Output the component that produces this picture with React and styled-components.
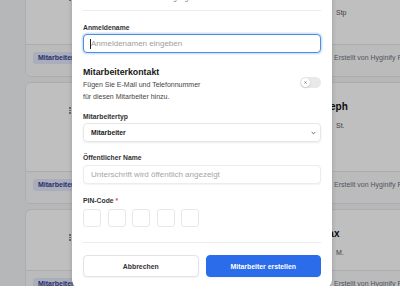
import React from "react";
import styled, { createGlobalStyle } from "styled-components";

const GlobalStyle = createGlobalStyle`
  html, body { margin: 0; padding: 0; width: 400px; height: 286px; overflow: hidden; background: #f3f4f6; }
  body { font-family: "Liberation Sans", Arial, Helvetica, sans-serif; }
  * { box-sizing: border-box; }
  #root { width: 400px; height: 286px; }
`;

const Page = styled.div`
  position: relative;
  width: 400px;
  height: 286px;
  overflow: hidden;
  background: #f3f4f6;
`;

const CardList = styled.div`
  display: flex;
  flex-direction: column;
  gap: 5px;
  margin-top: -31px;
  padding-left: 25px;
  width: 460px;
`;

const Card = styled.div`
  background: #ffffff;
  border: 1px solid #e5e7eb;
  border-radius: 6px;
  overflow: hidden;
`;

const CardBody = styled.div`
  height: ${(p) => p.$h}px;
  display: grid;
  grid-template-columns: 35px 4px 248px 1fr;
  align-items: start;
  padding: 18px 0 0 7px;
`;

const Kebab = styled.div`
  grid-column: 2;
  display: flex;
  flex-direction: column;
  align-items: center;
  gap: 1px;
  padding-top: 6px;
  span { width: 1.5px; height: 1.5px; border-radius: 50%; background: #777; }
`;

const NameBlock = styled.div`
  grid-column: 4;
  display: flex;
  flex-direction: column;
  gap: 7px;
`;

const Name = styled.div`
  font-size: 10px;
  line-height: 12px;
  font-weight: 700;
  color: #111;
`;

const Sub = styled.div`
  font-size: 7px;
  line-height: 12px;
  color: #555;
  padding-left: 16px;
`;

const CardFooter = styled.div`
  height: 32px;
  border-top: 1px solid #e5e7eb;
  background: #fafafa;
  display: grid;
  grid-template-columns: 301px 1fr;
  align-items: start;
  padding: 7px 0 0 7px;
`;

const Badge = styled.span`
  justify-self: start;
  font-size: 7px;
  line-height: 10px;
  padding: 1px 5px;
  border-radius: 3px;
  background: #e3e8fb;
  color: #34408f;
  font-weight: 700;
`;

const FooterText = styled.span`
  font-size: 7px;
  line-height: 12px;
  color: #6b7280;
  white-space: nowrap;
`;

const Overlay = styled.div`
  position: absolute;
  inset: 0;
  background: rgba(0, 0, 0, 0.25);
`;

const Modal = styled.div`
  position: absolute;
  left: 72px;
  top: -8px;
  width: 260px;
  background: #ffffff;
  border-radius: 8px;
  box-shadow: 0 0 5px rgba(0, 0, 0, 0.18);
  padding: 0 11px 11px;
  display: flex;
  flex-direction: column;
`;

const Subtitle = styled.div`
  font-size: 7px;
  line-height: 12px;
  color: #8a8a8a;
`;

const Divider = styled.div`
  margin-top: ${(p) => p.$gap}px;
  height: 1px;
  background: #ececec;
`;

const Field = styled.div`
  margin-top: ${(p) => p.$gap}px;
  display: flex;
  flex-direction: column;
  gap: ${(p) => p.$inner || 1}px;
`;

const Label = styled.label`
  font-size: 6.8px;
  line-height: 10px;
  font-weight: 700;
  color: #333;
`;

const Required = styled.span`
  color: #e5484d;
  margin-left: 2px;
`;

const InputShell = styled.div`
  height: 19px;
  display: flex;
  align-items: center;
  padding-left: 6px;
  border: 1px solid #4a8fe2;
  border-radius: 4px;
  box-shadow: 0 0 0 1.5px #d3e4f9;
  background: #fff;
`;

const Caret = styled.span`
  width: 1px;
  height: 10px;
  background: #222;
`;

const BareInput = styled.input`
  flex: 1;
  min-width: 0;
  border: none;
  outline: none;
  padding: 0;
  background: transparent;
  font-family: inherit;
  font-size: 8px;
  color: #222;
  &::placeholder { color: #9c9c9c; }
`;

const TextInput = styled.input`
  height: 19px;
  width: 100%;
  border: 1px solid #ececec;
  border-radius: 4px;
  padding: 0 7px;
  font-family: inherit;
  font-size: 8px;
  color: #222;
  outline: none;
  box-shadow: 0 1px 1.5px rgba(0, 0, 0, 0.05);
  &::placeholder { color: #a6a6a6; }
`;

const SelectBox = styled.div`
  height: 19px;
  display: flex;
  align-items: center;
  justify-content: space-between;
  padding: 0 4px 0 7px;
  border: 1px solid #e6e6e6;
  border-radius: 4px;
  box-shadow: 0 1px 2px rgba(0, 0, 0, 0.08);
  font-size: 6.8px;
  font-weight: 700;
  color: #222;
`;

const ContactRow = styled.div`
  margin-top: 13px;
  display: flex;
  justify-content: space-between;
  align-items: center;
`;

const ContactText = styled.div`
  display: flex;
  flex-direction: column;
  gap: 1px;
`;

const Heading = styled.div`
  font-size: 8.8px;
  line-height: 12px;
  font-weight: 700;
  color: #161616;
`;

const Desc = styled.div`
  font-size: 7px;
  line-height: 12px;
  color: #454545;
`;

const Toggle = styled.div`
  width: 21px;
  height: 11px;
  border-radius: 6px;
  background: #e9e9eb;
  padding: 1px;
  margin-bottom: 4px;
  display: flex;
  align-items: center;
`;

const Knob = styled.div`
  width: 9px;
  height: 9px;
  border-radius: 50%;
  background: #fff;
  box-shadow: 0 0.5px 1.5px rgba(0, 0, 0, 0.25);
  display: flex;
  align-items: center;
  justify-content: center;
`;

const PinRow = styled.div`
  display: flex;
  gap: 6.5px;
`;

const PinBox = styled.div`
  width: 18px;
  height: 18px;
  border: 1px solid #e8e8e8;
  border-radius: 3px;
  background: #fff;
`;

const Actions = styled.div`
  margin-top: 12px;
  display: grid;
  grid-template-columns: 1fr 1fr;
  gap: 7px;
`;

const Button = styled.button`
  height: 22px;
  border-radius: 4px;
  font-family: inherit;
  font-size: 6.9px;
  font-weight: 700;
  cursor: pointer;
  border: 1px solid ${(p) => (p.$primary ? "#2b6cea" : "#e3e3e3")};
  background: ${(p) => (p.$primary ? "#2b6cea" : "#ffffff")};
  color: ${(p) => (p.$primary ? "#ffffff" : "#333333")};
  box-shadow: 0 1px 1.5px rgba(0, 0, 0, 0.05);
`;

const cards = [
  { h: 74, name: "Stephan", short: "Stp" },
  { h: 88, name: "Steph", short: "St." },
  { h: 60, name: "Max", short: "M." },
];

export default function App() {
  return (
    <Page>
      <GlobalStyle />
      <CardList>
        {cards.map((c) => (
          <Card key={c.name}>
            <CardBody $h={c.h}>
              <Kebab>
                <span />
                <span />
                <span />
              </Kebab>
              <NameBlock>
                <Name>{c.name}</Name>
                <Sub>{c.short}</Sub>
              </NameBlock>
            </CardBody>
            <CardFooter>
              <Badge>Mitarbeiter</Badge>
              <FooterText>Erstellt von Hyginify F</FooterText>
            </CardFooter>
          </Card>
        ))}
      </CardList>
      <Overlay />
      <Modal>
        <Subtitle>Erstellen Sie einen neuen Zugang.</Subtitle>
        <Divider $gap={6} />
        <Field $gap={12}>
          <Label>Anmeldename</Label>
          <InputShell>
            <Caret />
            <BareInput placeholder="Anmeldenamen eingeben" />
          </InputShell>
        </Field>
        <ContactRow>
          <ContactText>
            <Heading>Mitarbeiterkontakt</Heading>
            <Desc>
              Fügen Sie E-Mail und Telefonnummer
              <br />
              für diesen Mitarbeiter hinzu.
            </Desc>
          </ContactText>
          <Toggle>
            <Knob>
              <svg width="3" height="3" viewBox="0 0 4 4">
                <path d="M0.5 0.5L3.5 3.5M3.5 0.5L0.5 3.5" stroke="#777" strokeWidth="1" />
              </svg>
            </Knob>
          </Toggle>
        </ContactRow>
        <Field $gap={9}>
          <Label>Mitarbeitertyp</Label>
          <SelectBox>
            <span>Mitarbeiter</span>
            <svg width="5" height="4" viewBox="0 0 5 4">
              <path d="M0.7 1L2.5 2.8L4.3 1" fill="none" stroke="#444" strokeWidth="0.8" />
            </svg>
          </SelectBox>
        </Field>
        <Field $gap={11} $inner={2}>
          <Label>Öffentlicher Name</Label>
          <TextInput placeholder="Unterschrift wird öffentlich angezeigt" />
        </Field>
        <Field $gap={12} $inner={3}>
          <Label>
            PIN-Code<Required>*</Required>
          </Label>
          <PinRow>
            {[0, 1, 2, 3, 4].map((i) => (
              <PinBox key={i} />
            ))}
          </PinRow>
        </Field>
        <Divider $gap={15} />
        <Actions>
          <Button>Abbrechen</Button>
          <Button $primary>Mitarbeiter erstellen</Button>
        </Actions>
      </Modal>
    </Page>
  );
}
